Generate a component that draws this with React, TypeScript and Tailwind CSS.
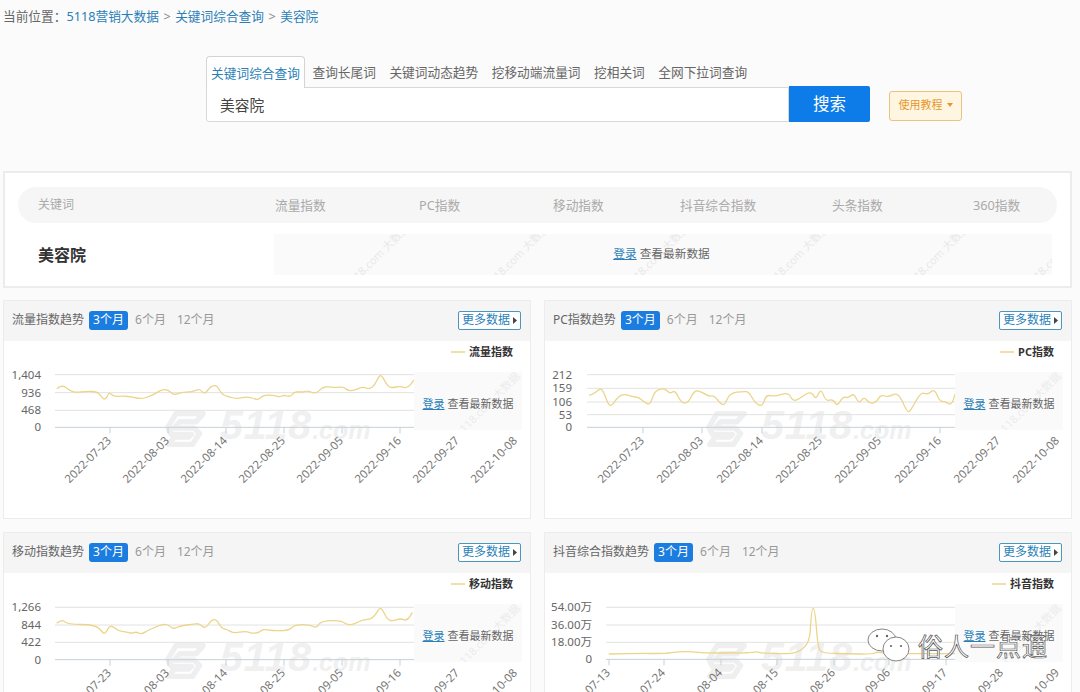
import React from "react"

const FONT = { fontFamily: '"Noto Sans", "Noto Sans CJK SC", sans-serif' }

type Pt = [number, number]

type ChartProps = {
    title: string
    legend: string
    labels: string[]
    dates: string[]
    ticks: number[]
    gridY: number[]
    line: Pt[]
    yOffset: number
    labelRight: number
    gridLeft: number
}

const line1: Pt[] = [[165,272],[180,260],[200,276],[220,284],[250,280],[285,281],[300,303],[308,303],[318,282],[330,296],[360,294],[385,297],[410,303],[440,294],[470,275],[490,275],[505,292],[525,283],[560,282],[580,272],[595,288],[605,276],[615,264],[632,262],[645,290],[670,297],[690,303],[720,295],[745,305],[755,303],[768,290],[800,293],[815,297],[825,291],[845,297],[858,280],[880,283],[895,278],[920,288],[938,268],[955,266],[975,269],[1000,266],[1012,278],[1030,278],[1055,266],[1075,274],[1090,262],[1104,231],[1112,235],[1128,264],[1140,270],[1165,264],[1185,272],[1205,246]]
const line2: Pt[] = [[140,292],[155,288],[172,270],[182,280],[195,318],[205,325],[225,295],[245,288],[265,296],[285,298],[300,312],[318,322],[330,278],[360,270],[375,288],[390,276],[408,315],[428,315],[445,280],[460,278],[490,296],[503,292],[525,320],[535,320],[550,285],[590,280],[605,282],[625,318],[645,325],[655,290],[680,296],[720,282],[735,315],[775,284],[790,285],[800,305],[815,270],[828,310],[850,303],[862,326],[878,296],[895,300],[910,285],[925,318],[940,296],[955,316],[975,314],[988,290],[1010,298],[1040,282],[1065,342],[1075,340],[1105,282],[1125,290],[1145,272],[1160,310],[1175,310],[1195,322],[1205,288]]
const line3: Pt[] = [[165,295],[180,282],[195,298],[280,299],[300,325],[308,325],[320,298],[345,318],[365,320],[385,326],[395,320],[412,328],[430,316],[450,308],[470,298],[490,298],[503,313],[525,302],[560,298],[580,295],[597,312],[615,285],[630,283],[645,310],[660,313],[680,325],[715,318],[735,326],[755,322],[765,312],[790,317],[840,317],[858,299],[900,299],[922,310],[932,289],[990,285],[1010,300],[1030,298],[1055,284],[1085,282],[1104,248],[1112,252],[1128,285],[1145,288],[1165,280],[1185,288],[1200,262]]
const line4: Pt[] = [[197,387],[280,385],[360,386],[400,380],[440,380],[480,384],[610,384],[628,379],[645,386],[780,386],[787,250],[797,250],[806,370],[820,385],[900,386],[960,388],[980,380],[1000,386],[1205,386]]

const datesA = ["2022-07-23", "2022-08-03", "2022-08-14", "2022-08-25", "2022-09-05", "2022-09-16", "2022-09-27", "2022-10-08"]
const datesB = ["2022-07-13", "2022-07-24", "2022-08-04", "2022-08-15", "2022-08-26", "2022-09-06", "2022-09-17", "2022-09-28", "2022-10-09"]

const charts: ChartProps[] = [
    { title: "流量指数趋势", legend: "流量指数", labels: ["1,404", "936", "468", "0"], dates: datesA, ticks: [106, 164, 222, 280, 338, 396, 454, 512], gridY: [230, 284, 337, 388], line: line1, yOffset: -43, labelRight: 37, gridLeft: 51 },
    { title: "PC指数趋势", legend: "PC指数", labels: ["212", "159", "106", "53", "0"], dates: datesA, ticks: [98, 157, 217, 276, 335, 395, 454, 513], gridY: [230, 271, 312, 350, 388], line: line2, yOffset: -43, labelRight: 27, gridLeft: 42 },
    { title: "移动指数趋势", legend: "移动指数", labels: ["1,266", "844", "422", "0"], dates: datesA, ticks: [106, 164, 222, 280, 338, 396, 454, 512], gridY: [247, 300, 352, 404], line: line3, yOffset: -48, labelRight: 37, gridLeft: 51 },
    { title: "抖音综合指数趋势", legend: "抖音指数", labels: ["54.00万", "36.00万", "18.00万", "0"], dates: datesB, ticks: [64, 119, 176, 232, 289, 344, 401, 457, 513], gridY: [247, 300, 352, 403], line: line4, yOffset: -48, labelRight: 47, gridLeft: 61 },
]

// rounded line through the points, using midpoints as anchors
function smooth(pts: Pt[]) {
    let d = `M${pts[0][0]} ${pts[0][1]}`
    for (let i = 1; i < pts.length - 1; i++) {
        const mx = (pts[i][0] + pts[i + 1][0]) / 2
        const my = (pts[i][1] + pts[i + 1][1]) / 2
        d += ` Q${pts[i][0]} ${pts[i][1]} ${mx} ${my}`
    }
    const last = pts[pts.length - 1]
    return d + ` L${last[0]} ${last[1]}`
}

function Watermark() {
    return (
        <div className="absolute left-[161px] top-[69px] flex items-end select-none text-[#f0f0f0]">
            <svg width="42" height="38" viewBox="0 0 46 42" fill="none" stroke="#efefef" strokeWidth="6" strokeLinejoin="round">
                <path d="M12 4 H42 L34 13 H16 L10 20 H32 L38 26 L30 38 H4 L10 30 H26 L29 27 H7 L3 19 Z" />
            </svg>
            <span className="ml-[13px] mb-[8px] text-[41px] leading-[30px] font-bold italic tracking-[1px] font-['Liberation_Sans',sans-serif]">5118</span>
            <span className="mb-[8px] text-[25px] leading-[20px] font-bold italic font-['Liberation_Sans',sans-serif]">.com</span>
        </div>
    )
}

function LoginOverlay() {
    return (
        <div className="absolute left-[410px] top-[31px] w-[108px] h-[58px] pt-[6px] flex items-center justify-center overflow-hidden bg-[#fafafa] text-[11px] text-[#666]">
            <span className="absolute left-[36px] top-[22px] -rotate-45 whitespace-nowrap text-[11px] text-[#ececec]">118.com 大数据</span>
            <span className="relative whitespace-nowrap">
                <span className="text-[#2a7fb8] underline">登录</span> 查看最新数据
            </span>
        </div>
    )
}

function ChartCard({ title, legend, labels, dates, ticks, gridY, line, yOffset, labelRight, gridLeft }: ChartProps) {
    const toX = (zx: number) => zx / 2.91 - 4
    const toY = (zy: number) => zy / 3 + yOffset
    const bottom = toY(gridY[gridY.length - 1])
    const legendWidth = legend === "PC指数" ? 36 : 44

    return (
        <div className="h-[219px] border border-[#ececec] bg-white">
            <div className="h-10 flex items-center bg-[#f5f5f5] pl-[8px] pr-[9px] pb-[2px] text-xs text-[#777]">
                <span className="text-[#666]">{title}</span>
                <span className="ml-[5px] h-[19px] w-[39px] flex items-center justify-center rounded-[3px] bg-[#1a7ddf] text-white">3个月</span>
                <span className="ml-[7px] text-[#999]">6个月</span>
                <span className="ml-[11px] text-[#999]">12个月</span>
                <span className="ml-auto h-[19px] w-[63px] flex items-center justify-center gap-[3px] border border-[#4a96bd] rounded-[2px] bg-white text-[#2a7fb8]">
                    更多数据
                    <svg width="4" height="7" viewBox="0 0 4 7"><path d="M0 0 L4 3.5 L0 7 Z" fill="#444" /></svg>
                </span>
            </div>
            <div className="relative h-[178px] overflow-hidden">
                <Watermark />
                <svg className="absolute inset-0" width="526" height="178" viewBox="0 0 526 178">
                    {gridY.map((y, i) => (
                        <line
                            key={y}
                            x1={gridLeft}
                            x2="414"
                            y1={toY(y)}
                            y2={toY(y)}
                            stroke={i === gridY.length - 1 ? "#c4d0d6" : "#e2e2e2"}
                        />
                    ))}
                    {labels.map((t, i) => (
                        <text key={t} x={labelRight} y={toY(gridY[i]) + 4} textAnchor="end" fontSize="11.5" fill="#666" style={FONT}>{t}</text>
                    ))}
                    {ticks.map((x, i) => (
                        <g key={x}>
                            {x < 414 && <line x1={x} x2={x} y1={bottom} y2={bottom + 6} stroke="#c4d0d6" />}
                            <text
                                x={x + 2}
                                y={bottom + 14}
                                textAnchor="end"
                                fontSize="11.5"
                                fill="#777"
                                transform={`rotate(-45 ${x + 2} ${bottom + 14})`}
                                style={FONT}
                            >
                                {dates[i]}
                            </text>
                        </g>
                    ))}
                    <path
                        d={smooth(line.map(([x, y]) => [toX(x), toY(y)] as Pt))}
                        fill="none"
                        stroke="#ecd58a"
                        strokeWidth="1.3"
                    />
                    <line x1={509 - legendWidth - 18} x2={509 - legendWidth - 4} y1="11" y2="11" stroke="#ecd58a" strokeWidth="1.5" />
                    <text x="509" y="15" textAnchor="end" fontSize="11" fontWeight="700" fill="#333" style={FONT}>{legend}</text>
                </svg>
                <LoginOverlay />
            </div>
        </div>
    )
}

export default function App() {
    const tabs = ["查询长尾词", "关键词动态趋势", "挖移动端流量词", "挖相关词", "全网下拉词查询"]
    const columns = ["流量指数", "PC指数", "移动指数", "抖音综合指数", "头条指数", "360指数"]

    return (
        <div className="relative h-[692px] w-[1080px] overflow-hidden bg-[#fbfbfb] pl-[3px] pr-[8px]" style={FONT}>
            {/* Breadcrumb */}
            <div className="h-[34px] flex items-center text-[12.7px] text-[#666]">
                <span className="whitespace-pre">当前位置：</span>
                <span className="text-[#2a7fb8]">5118营销大数据</span>
                <span className="mx-[4.5px] text-[#888]">&gt;</span>
                <span className="text-[#2a7fb8]">关键词综合查询</span>
                <span className="mx-[4.5px] text-[#888]">&gt;</span>
                <span className="text-[#2a7fb8]">美容院</span>
            </div>

            {/* Search */}
            <div className="mt-[22px] ml-[203px]">
                <div className="flex items-end gap-[13.5px] text-[12.7px] text-[#666]">
                    <div className="relative z-10 -mb-px h-[32px] w-[99px] pt-[2px] flex items-center justify-center border border-b-0 border-[#d4d4d4] rounded-t-[4px] bg-white text-[#2a7fb8]">
                        关键词综合查询
                    </div>
                    {tabs.map((t, i) => (
                        <div key={t} className={i === 0 ? "h-[31px] pt-[2px] -ml-[6px] flex items-center" : "h-[31px] pt-[2px] flex items-center"}>{t}</div>
                    ))}
                </div>
                <div className="flex items-start">
                    <div className="h-[35px] w-[583px] pt-px flex items-center border border-[#d8d8d8] rounded-bl-[3px] bg-white pl-[13px] text-[14.7px] text-[#444]">
                        美容院
                    </div>
                    <div className="-mt-px h-[36px] w-[81px] flex items-center justify-center rounded-r-[2px] bg-[#0d7ce8] text-[16.5px] text-white">搜索</div>
                    <div className="ml-[19px] mt-[4px] h-[30px] w-[73px] pb-[2px] flex items-center justify-center gap-[4px] border border-[#e8c483] rounded-[3px] bg-[#fff6e2] text-[11px] text-[#e8962c]">
                        使用教程
                        <svg width="6" height="4" viewBox="0 0 6 4"><path d="M0 0 H6 L3 4 Z" fill="#e8962c" /></svg>
                    </div>
                </div>
            </div>

            {/* Summary */}
            <div className="mt-[49px] h-[117px] border-2 border-[#ececec] bg-white px-[13px] pt-[14px]">
                <div className="h-[36px] grid grid-cols-[237px_144px_134px_127px_152px_141px_1fr] items-center rounded-[18px] bg-[#f6f6f6] pl-[20px] text-[#aaa]">
                    <span className="text-xs">关键词</span>
                    {columns.map(c => (
                        <span key={c} className="text-[12.7px] leading-none">{c}</span>
                    ))}
                </div>
                <div className="mt-[11px] flex items-center pl-[20px]">
                    <span className="w-[236px] text-base font-bold text-[#333]">美容院</span>
                    <div className="relative h-[41px] w-[778px] pb-[2px] pr-[3px] flex items-center justify-center overflow-hidden bg-[#fafafa] text-[11.7px] text-[#666]">
                        {[60, 200, 340, 480, 620, 740].map(x => (
                            <span key={x} className="absolute top-[14px] -rotate-45 whitespace-nowrap text-[11px] text-[#e9e9e9]" style={{ left: x }}>5118.com 大数据</span>
                        ))}
                        <span className="relative"><span className="text-[#2a7fb8] underline">登录</span> 查看最新数据</span>
                    </div>
                </div>
            </div>

            {/* Trend charts */}
            <div className="mt-[12px] grid grid-cols-2 gap-x-[13px] gap-y-[13px]">
                {charts.map(c => (
                    <ChartCard key={c.title} {...c} />
                ))}
            </div>

            {/* Account mark over the picture */}
            <div className="absolute left-[866px] top-[628px] flex items-center">
                <svg width="50" height="36" viewBox="0 0 50 36" fill="#ffffff" stroke="#666" strokeWidth="0.8">
                    <ellipse cx="16" cy="12" rx="14" ry="11" />
                    <ellipse cx="30" cy="21" rx="13" ry="12" />
                    <circle cx="11" cy="8" r="1.2" fill="#666" stroke="none" />
                    <circle cx="21" cy="8" r="1.2" fill="#666" stroke="none" />
                    <circle cx="25" cy="18" r="1.1" fill="#666" stroke="none" />
                    <circle cx="35" cy="18" r="1.1" fill="#666" stroke="none" />
                </svg>
                <span className="ml-[2px] text-[25px] leading-none tracking-[1px] text-white [-webkit-text-stroke:0.7px_#555]">俗人一点通</span>
            </div>
        </div>
    )
}
